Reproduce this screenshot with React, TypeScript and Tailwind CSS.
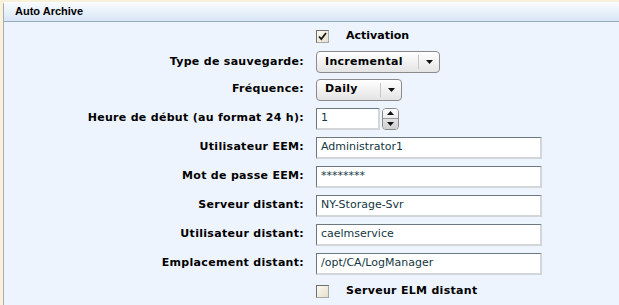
import React from 'react';

const labelCls = "w-[305px] shrink-0 text-right pr-[1px] font-bold text-[11px] tracking-[0.3px] text-black";

function Row({ label, h = 'h-[29px]', children }: { label?: string; h?: string; children: React.ReactNode }) {
  return (
    <div className={`flex items-center ${h}`}>
      <div className={labelCls}>{label}</div>
      <div className="pl-[11px] flex items-center">{children}</div>
    </div>
  );
}

function Check({ checked }: { checked?: boolean }) {
  return (
    <div className="w-[13px] h-[13px] border border-t-[#6f6f6f] border-l-[#6f6f6f] border-r-[#a8a8a8] border-b-[#a8a8a8] bg-linear-to-br from-[#fcfaf2] to-[#e6dfca] flex items-center justify-center">
      {checked && (
        <svg width="11" height="11" viewBox="0 0 11 11">
          <path d="M2 5.5 L4.3 8 L9 2" stroke="#1a1a1a" strokeWidth="1.8" fill="none" />
        </svg>
      )}
    </div>
  );
}

function Select({ value, width }: { value: string; width: string }) {
  return (
    <div className={`${width} h-[22px] rounded-[4px] border border-[#8a8a8a] bg-linear-to-b from-white to-[#e4e4e4] flex items-center`}>
      <span className="flex-1 pl-[8px] font-bold text-[11px] text-black tracking-[0.3px]">{value}</span>
      <span className="w-px h-[14px] bg-[#c6c6c6]" />
      <span className="w-[20px] flex items-center justify-center">
        <svg width="7" height="4" viewBox="0 0 7 4"><path d="M0 0 H7 L3.5 4 Z" fill="#111" /></svg>
      </span>
    </div>
  );
}

function TextBox({ value, width = 'w-[226px]' }: { value: string; width?: string }) {
  return (
    <div className={`${width} h-[22px] bg-white border border-t-[#6c7780] border-l-[#6c7780] border-r-2 border-b-2 border-r-[#d3d6d9] border-b-[#d3d6d9] flex items-center pl-[4px] text-[11px] text-[#143742] font-['DejaVu_Sans',sans-serif]`}>
      {value}
    </div>
  );
}

export default function App() {
  return (
    <div className="w-[619px] h-[305px] overflow-hidden bg-[#f9f2da] pt-[2px] pl-[3px] font-['DejaVu_Sans',sans-serif]">
      <div className="h-[303px] bg-[#eef4fd] border-l border-[#a6aeb4] rounded-tl-[3px] flex flex-col">
        <div className="h-[20px] shrink-0 bg-linear-to-b from-[#fbfdff] to-[#d7e5f6] border-b border-[#98a9b9] flex items-center pl-[11px] font-['Liberation_Sans',sans-serif] font-bold text-[11px] text-black">
          Auto Archive
        </div>
        <div className="pt-[1px] -ml-[4px]">
          <Row h="h-[26px]">
            <div className="flex items-center gap-[17px]">
              <Check checked />
              <span className="font-bold text-[11px] text-black">Activation</span>
            </div>
          </Row>
          <Row label="Type de sauvegarde:" h="h-[26px]">
            <Select value="Incremental" width="w-[124px]" />
          </Row>
          <Row label="Fréquence:">
            <Select value="Daily" width="w-[86px]" />
          </Row>
          <Row label="Heure de début (au format 24 h):">
            <div className="flex items-center gap-[2px]">
              <TextBox value="1" width="w-[64px]" />
              <div className="w-[17px] h-[22px] rounded-[4px] border border-[#8a8a8a] flex flex-col overflow-hidden">
                <div className="flex-1 bg-linear-to-b from-white to-[#ececec] flex items-center justify-center border-b border-[#9a9a9a]">
                  <svg width="7" height="4" viewBox="0 0 7 4"><path d="M0 4 H7 L3.5 0 Z" fill="#111" /></svg>
                </div>
                <div className="flex-1 bg-linear-to-b from-[#e2e2e2] to-[#cfcfcf] flex items-center justify-center">
                  <svg width="7" height="4" viewBox="0 0 7 4"><path d="M0 0 H7 L3.5 4 Z" fill="#111" /></svg>
                </div>
              </div>
            </div>
          </Row>
          <Row label="Utilisateur EEM:">
            <TextBox value="Administrator1" />
          </Row>
          <Row label="Mot de passe EEM:">
            <TextBox value="********" />
          </Row>
          <Row label="Serveur distant:">
            <TextBox value="NY-Storage-Svr" />
          </Row>
          <Row label="Utilisateur distant:">
            <TextBox value="caelmservice" />
          </Row>
          <Row label="Emplacement distant:">
            <TextBox value="/opt/CA/LogManager" />
          </Row>
          <Row h="h-[26px]">
            <div className="flex items-center gap-[17px]">
              <Check />
              <span className="font-bold text-[11px] tracking-[0.3px] text-black">Serveur ELM distant</span>
            </div>
          </Row>
        </div>
      </div>
    </div>
  );
}
